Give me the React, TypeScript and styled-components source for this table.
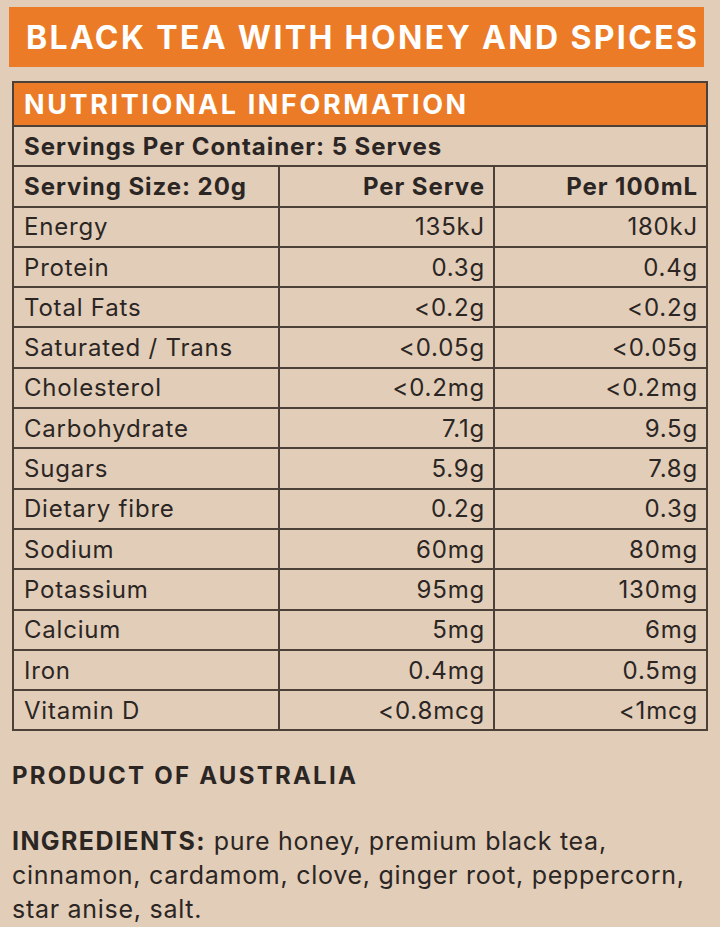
import React from "react";
import styled, { createGlobalStyle } from "styled-components";

const Global = createGlobalStyle`
  html, body { margin: 0; padding: 0; background: #e2cdb9; }
  body { font-family: Inter, "Liberation Sans", sans-serif; color: #2b2623; }
`;

const Page = styled.div`
  width: 720px;
  min-height: 927px;
  background: #e2cdb9;
  padding: 7px 0 0 0;
  box-sizing: border-box;
  display: flex;
  flex-direction: column;
`;

const Banner = styled.h1`
  margin: 0 16px 0 9px;
  height: 60px;
  background: #ec7b27;
  color: #fff;
  font-size: 32px;
  font-weight: 700;
  letter-spacing: 2.35px;
  display: flex;
  align-items: center;
  padding-left: 17px;
  box-sizing: border-box;
  white-space: nowrap;
`;

const Table = styled.table`
  margin: 14px 0 0 12px;
  width: 694px;
  border-collapse: collapse;
  table-layout: fixed;
  border: 2px solid #4b4139;
`;

const HeadCell = styled.th`
  background: #ec7b27;
  color: #fff;
  font-size: 27px;
  font-weight: 700;
  text-align: left;
  height: 42px;
  padding: 0 0 0 10px;
  border: 2px solid #4b4139;
  letter-spacing: 2.6px;
  white-space: nowrap;
`;

const Cell = styled.td<{ $right?: boolean; $bold?: boolean }>`
  border: 2px solid #4b4139;
  height: 40.3px;
  padding: 0 ${(p) => (p.$right ? "8px" : "0")} 0 ${(p) => (p.$right ? "0" : "10px")};
  text-align: ${(p) => (p.$right ? "right" : "left")};
  font-size: 24px;
  font-weight: ${(p) => (p.$bold ? 700 : 400)};
  letter-spacing: ${(p) => (p.$bold ? "0.95px" : "0.8px")};
  white-space: nowrap;
  box-sizing: border-box;
`;

const Note = styled.p`
  margin: 28px 0 0 12px;
  font-size: 24px;
  font-weight: 700;
  line-height: 34px;
  letter-spacing: 2.25px;
`;

const Ingredients = styled.p`
  margin: 31px 0 0 12px;
  font-size: 25px;
  line-height: 34px;
  letter-spacing: 0.72px;
  white-space: nowrap;
`;

const Strong = styled.strong`
  font-weight: 700;
  letter-spacing: 1.4px;
`;

const rows: [string, string, string][] = [
  ["Energy", "135kJ", "180kJ"],
  ["Protein", "0.3g", "0.4g"],
  ["Total Fats", "<0.2g", "<0.2g"],
  ["Saturated / Trans", "<0.05g", "<0.05g"],
  ["Cholesterol", "<0.2mg", "<0.2mg"],
  ["Carbohydrate", "7.1g", "9.5g"],
  ["Sugars", "5.9g", "7.8g"],
  ["Dietary fibre", "0.2g", "0.3g"],
  ["Sodium", "60mg", "80mg"],
  ["Potassium", "95mg", "130mg"],
  ["Calcium", "5mg", "6mg"],
  ["Iron", "0.4mg", "0.5mg"],
  ["Vitamin D", "<0.8mcg", "<1mcg"],
];

export default function App() {
  return (
    <Page>
      <Global />
      <Banner>BLACK TEA WITH HONEY AND SPICES</Banner>
      <Table>
        <colgroup>
          <col style={{ width: 266 }} />
          <col style={{ width: 215 }} />
          <col style={{ width: 213 }} />
        </colgroup>
        <thead>
          <tr>
            <HeadCell colSpan={3}>NUTRITIONAL INFORMATION</HeadCell>
          </tr>
        </thead>
        <tbody>
          <tr>
            <Cell colSpan={3} $bold>
              Servings Per Container: 5 Serves
            </Cell>
          </tr>
          <tr>
            <Cell $bold>Serving Size: 20g</Cell>
            <Cell $bold $right>
              Per Serve
            </Cell>
            <Cell $bold $right>
              Per 100mL
            </Cell>
          </tr>
          {rows.map(([n, a, b]) => (
            <tr key={n}>
              <Cell>{n}</Cell>
              <Cell $right>{a}</Cell>
              <Cell $right>{b}</Cell>
            </tr>
          ))}
        </tbody>
      </Table>
      <Note>PRODUCT OF AUSTRALIA</Note>
      <Ingredients>
        <Strong>INGREDIENTS:</Strong> pure honey, premium black tea,
        <br />
        cinnamon, cardamom, clove, ginger root, peppercorn,
        <br />
        star anise, salt.
      </Ingredients>
    </Page>
  );
}
